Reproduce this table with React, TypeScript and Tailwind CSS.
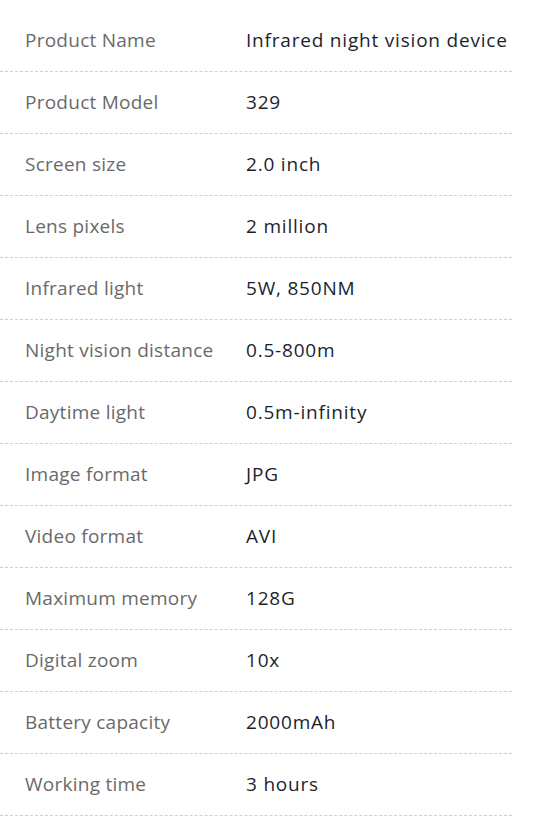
const specs = [
  { label: "Product Name", value: "Infrared night vision device" },
  { label: "Product Model", value: "329" },
  { label: "Screen size", value: "2.0 inch" },
  { label: "Lens pixels", value: "2 million" },
  { label: "Infrared light", value: "5W, 850NM" },
  { label: "Night vision distance", value: "0.5-800m" },
  { label: "Daytime light", value: "0.5m-infinity" },
  { label: "Image format", value: "JPG" },
  { label: "Video format", value: "AVI" },
  { label: "Maximum memory", value: "128G" },
  { label: "Digital zoom", value: "10x" },
  { label: "Battery capacity", value: "2000mAh" },
  { label: "Working time", value: "3 hours" },
];

export default function App() {
  return (
    <div className="min-h-screen bg-white pt-[10px] font-['Open_Sans',sans-serif]">
      {/* Spec table */}
      <div className="w-[512px]">
        {specs.map((row) => (
          <div
            key={row.label}
            className="flex h-[62px] items-center border-b border-dashed border-[#cfcfcf] text-[19px]"
          >
            <span className="w-[246px] shrink-0 pl-[25px] tracking-[0.25px] text-[#6a6a6a]">{row.label}</span>
            <span className="whitespace-nowrap tracking-[0.8px] text-[#1c1f2e]">{row.value}</span>
          </div>
        ))}
      </div>
    </div>
  );
}
